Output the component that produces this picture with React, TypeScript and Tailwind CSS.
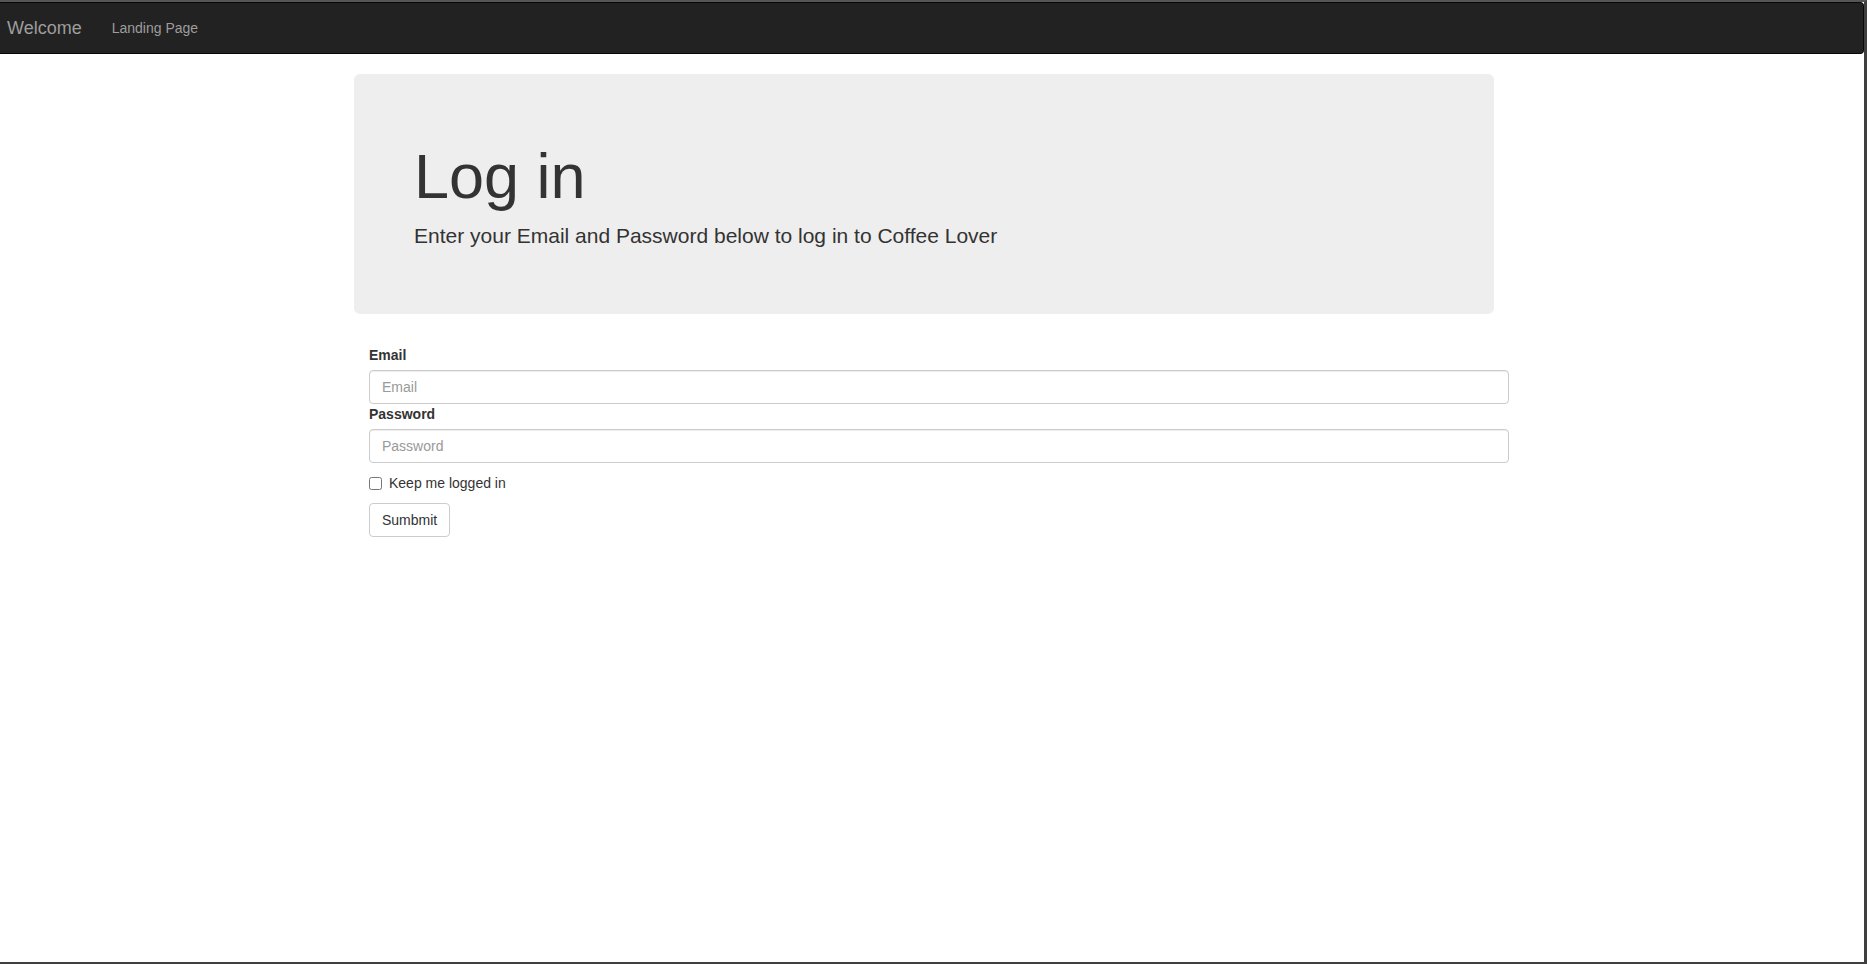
import React from 'react'

const font = { fontFamily: '"Liberation Sans", Arial, Helvetica, sans-serif' }

function Navbar() {
  return (
    <nav className="h-[52px] shrink-0 bg-[#222] border border-l-0 border-[#080808] rounded-r-[4px] flex items-start">
      <a className="ml-[7px] pt-[15px] pb-[15px] pr-[15px] text-[18px] leading-[20px] text-[#9d9d9d]">
        Welcome
      </a>
      <a className="pt-[15px] pb-[15px] px-[15px] text-[14px] leading-[20px] text-[#9d9d9d]">
        Landing Page
      </a>
    </nav>
  )
}

function Jumbotron() {
  return (
    <div className="ml-[354px] mt-[20px] w-[1140px] bg-[#eee] rounded-[6px] px-[60px] pt-[48px] pb-[48px]">
      <h1 className="mt-[20px] mb-[10px] text-[63px] leading-[69px] text-[#333]">Log in</h1>
      <p className="mb-[15px] text-[21px] leading-[30px] text-[#333]">
        Enter your Email and Password below to log in to Coffee Lover
      </p>
    </div>
  )
}

function LoginForm() {
  const inputClass =
    "block w-full h-[34px] px-[12px] py-[6px] text-[14px] leading-[20px] text-[#555] bg-white border border-[#ccc] rounded-[4px] shadow-[inset_0_1px_1px_rgba(0,0,0,0.075)] placeholder:text-[#999] outline-none"

  return (
    <form className="ml-[369px] mt-[31px] w-[1140px] text-[14px] leading-[20px] text-[#333]">
      <label className="inline-block mb-[5px] font-bold">Email</label>
      <input type="email" placeholder="Email" className={inputClass} />
      <label className="inline-block mb-[5px] font-bold">Password</label>
      <input type="password" placeholder="Password" className={inputClass} />
      <div className="my-[10px] flex items-start">
        <input type="checkbox" className="mt-[4px] w-[13px] h-[13px] m-0" />
        <span className="ml-[7px]">Keep me logged in</span>
      </div>
      <button
        type="button"
        className="h-[34px] px-[12px] py-[6px] bg-white border border-[#ccc] rounded-[4px] text-[14px] leading-[20px] text-[#333]"
      >
        Sumbmit
      </button>
    </form>
  )
}

export default function App() {
  return (
    <div
      style={font}
      className="w-[1867px] h-[964px] overflow-hidden bg-white flex flex-col border-t-2 border-t-[#565656] border-r-[3px] border-r-[#3f3f3f] border-b-2 border-b-[#3f3f3f]"
    >
      <Navbar />
      <Jumbotron />
      <LoginForm />
    </div>
  )
}
